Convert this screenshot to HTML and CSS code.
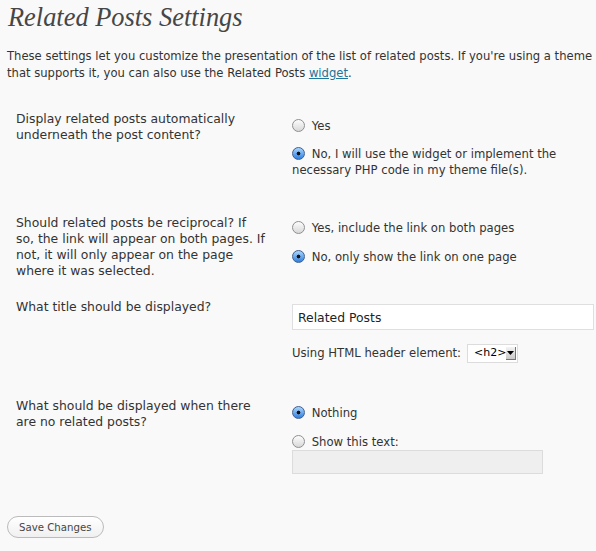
FILE: index.html
```html
<!DOCTYPE html>
<html>
<head>
<meta charset="utf-8">
<link rel="stylesheet" href="styles.css">
</head>
<body>
<div class="wrap">
  <h2 class="title">Related Posts Settings</h2>
  <p class="intro">These settings let you customize the presentation of the list of related posts. If you're using a theme that supports it, you can also use the Related Posts <a href="#">widget</a>.</p>
  <form class="form">
    <div class="row row1">
      <div class="label">Display related posts automatically underneath the post content?</div>
      <div class="opts">
        <label class="opt"><input type="radio" name="auto"> Yes</label>
        <label class="opt"><input type="radio" name="auto" checked> No, I will use the widget or implement the necessary PHP code in my theme file(s).</label>
      </div>
    </div>
    <div class="row row2">
      <div class="label">Should related posts be reciprocal? If so, the link will appear on both pages. If not, it will only appear on the page where it was selected.</div>
      <div class="opts">
        <label class="opt"><input type="radio" name="rec"> Yes, include the link on both pages</label>
        <label class="opt"><input type="radio" name="rec" checked> No, only show the link on one page</label>
      </div>
    </div>
    <div class="row row3">
      <div class="label">What title should be displayed?</div>
      <div class="opts">
        <input class="text" type="text" value="Related Posts">
        <div class="hdr">Using HTML header element: <span class="select"><span class="sel-val">&lt;h2&gt;</span><span class="sel-btn"><svg width="9" height="6" viewBox="0 0 9 6"><path d="M1 1h7L4.5 5z" fill="#000"/></svg></span></span></div>
      </div>
    </div>
    <div class="row row4">
      <div class="label">What should be displayed when there are no related posts?</div>
      <div class="opts">
        <label class="opt"><input type="radio" name="none" checked> Nothing</label>
        <label class="opt tight"><input type="radio" name="none"> Show this text:</label>
        <input class="text disabled" type="text" disabled>
      </div>
    </div>
    <div class="submit"><button type="button" class="btn">Save Changes</button></div>
  </form>
</div>
</body>
</html>
```
FILE: styles.css
```css
html, body {
  margin: 0;
  padding: 0;
  background: #f9f9f9;
}
body {
  font-family: "DejaVu Sans", Verdana, sans-serif;
  font-size: 12px;
  color: #333;
}
.wrap {
  padding: 0 0 0 7px;
}
.title {
  margin: 0;
  padding: 2px 0 0 1px;
  font-family: "Liberation Serif", Georgia, serif;
  font-style: italic;
  font-weight: normal;
  font-size: 26.4px;
  line-height: 30px;
  color: #464646;
}
.intro {
  margin: 16px 0 0 0;
  line-height: 17px;
  font-size: 11.6px;
}
.intro a {
  color: #21759b;
}
.form {
  margin-top: 19px;
}
.row {
  display: grid;
  grid-template-columns: 285px 1fr;
}
.label {
  padding: 10px 25px 10px 9px;
  line-height: 16px;
  font-size: 12.4px;
}
.opts {
  padding: 15px 0 10px 0;
  font-size: 11.65px;
  line-height: 16px;
  display: flex;
  flex-direction: column;
  align-items: flex-start;
}
.row1 .opts {
  padding-top: 17px;
  padding-bottom: 27px;
}
.row4 .opts {
  padding-top: 17px;
}
.opt {
  display: block;
  margin-bottom: 12px;
}
.row2 .opt, .row4 .opt {
  margin-bottom: 13px;
}
.opt:last-child {
  margin-bottom: 0;
}
.row4 .opt.tight {
  margin-bottom: 0;
}
.opt input {
  -webkit-appearance: none;
  appearance: none;
  width: 13px;
  height: 13px;
  margin: 0 3px 0 0;
  border: 1px solid #8f8f8f;
  border-radius: 50%;
  background: linear-gradient(#fdfdfd, #d8d8d8);
  vertical-align: -2px;
  box-sizing: border-box;
}
.opt input:checked {
  border-color: #3f5f8f;
  background: radial-gradient(circle at 50% 50%, #111 0 1.6px, transparent 2.2px), linear-gradient(#a9d6ff, #2f7fe0);
}
.text {
  display: block;
  box-sizing: border-box;
  width: 302px;
  height: 26px;
  border: 1px solid #dfdfdf;
  background: #fff;
  padding: 3px 5px;
  font-family: inherit;
  font-size: 12.4px;
  color: #222;
  margin: 0 0 13px 0;
}
.hdr {
  display: flex;
  align-items: center;
  gap: 6px;
  height: 20px;
  margin-bottom: 15px;
}
.select {
  display: inline-flex;
  align-items: center;
  height: 19px;
  width: 51px;
  box-sizing: border-box;
  border: 1px solid #dcdcdc;
  background: #fff;
  padding: 0 2px 0 6px;
  font-size: 11px;
  color: #000;
}
.sel-val { flex: 1; }
.sel-btn {
  width: 12px;
  height: 12px;
  background: linear-gradient(#f4f4f4, #c9c9c9);
  border-right: 1px solid #777;
  border-bottom: 1px solid #777;
  display: inline-flex;
  align-items: center;
  justify-content: center;
}
.text.disabled {
  width: 251px;
  height: 24px;
  background: #efefef;
  border-color: #dcdcdc;
  margin-bottom: 0;
}
.submit {
  padding: 32px 0 0 0;
}
.btn {
  font-family: inherit;
  font-size: 10.2px;
  color: #464646;
  height: 22px;
  padding: 0 11px;
  border: 1px solid #bbb;
  border-radius: 11px;
  background: linear-gradient(#ffffff, #f0f0f0);
}
```
